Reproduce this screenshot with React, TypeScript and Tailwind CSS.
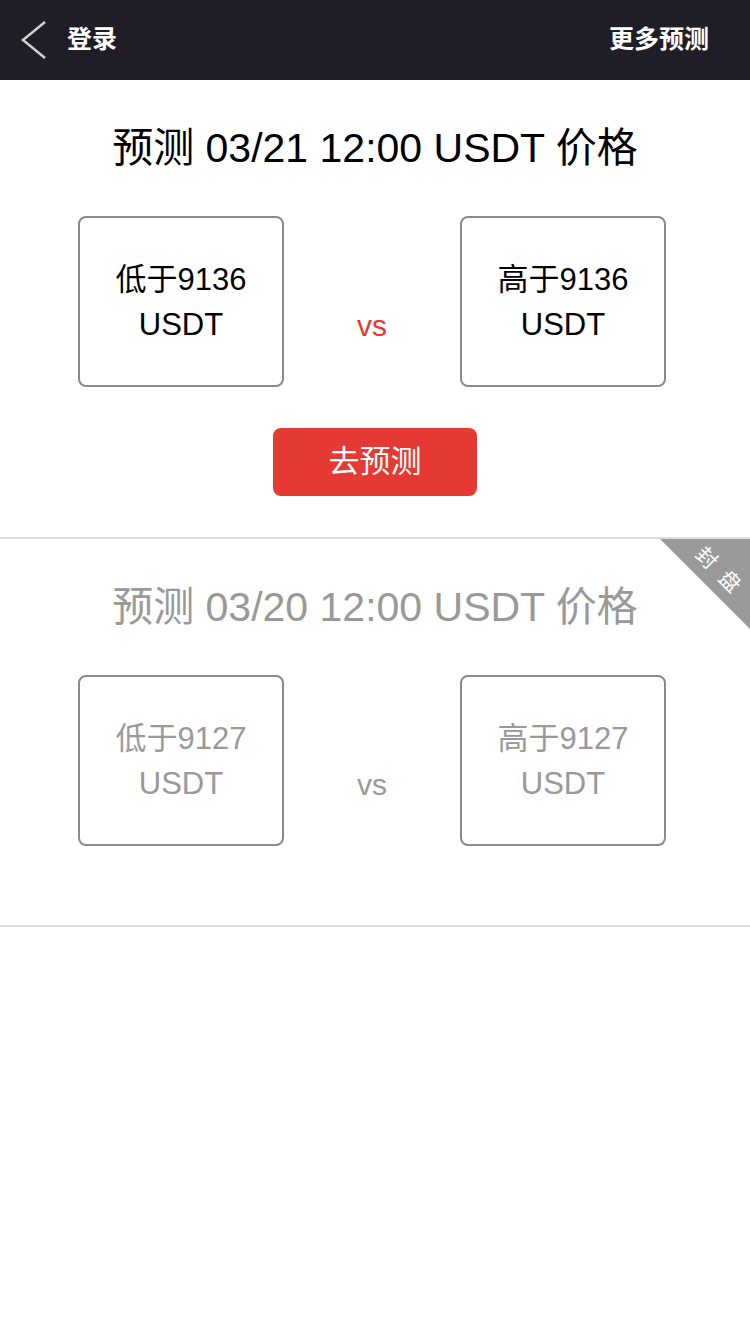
import React from "react";

const font = { fontFamily: '"Liberation Sans", "Noto Sans CJK SC", sans-serif' };

function Box({ label, gray }: { label: string; gray?: boolean }) {
  return (
    <div
      className={`w-[206px] h-[171px] rounded-[8px] border-2 border-[#8a8a8a] flex flex-col items-center justify-center text-[31px] leading-[45px] ${
        gray ? "text-[#999999]" : "text-black"
      }`}
    >
      <div>{label}</div>
      <div>USDT</div>
    </div>
  );
}

function Section({
  date,
  price,
  closed,
}: {
  date: string;
  price: string;
  closed?: boolean;
}) {
  return (
    <div
      className={`relative overflow-hidden border-b-2 border-[#dddddd] pt-[46px] ${
        closed ? "pb-[79px]" : "pb-[41px]"
      }`}
    >
      <div
        className={`h-[44px] leading-[44px] text-center text-[41px] ${
          closed ? "text-[#999999]" : "text-black"
        }`}
      >
        预测 {date} 12:00 USDT 价格
      </div>
      <div className="mt-[46px] flex justify-center items-center pr-[6px]">
        <Box label={`低于${price}`} gray={closed} />
        <div
          className={`w-[176px] text-center text-[30px] pt-[48px] ${
            closed ? "text-[#999999]" : "text-[#e5392f]"
          }`}
        >
          vs
        </div>
        <Box label={`高于${price}`} gray={closed} />
      </div>
      {!closed && (
        <div className="mt-[41px] flex justify-center">
          <button className="w-[204px] h-[68px] rounded-[8px] bg-[#e53a33] text-white text-[31px]">
            去预测
          </button>
        </div>
      )}
      {closed && (
        <div className="absolute top-0 right-0 w-[90px] h-[90px]">
          <div
            className="absolute inset-0 bg-[#9a9a9a]"
            style={{ clipPath: "polygon(0 0, 100% 0, 100% 100%)" }}
          />
          <div className="absolute left-[28px] top-[19px] w-[60px] h-[24px] flex justify-center gap-[12px] rotate-45 whitespace-nowrap text-white text-[21px] leading-[24px]">
            <span>封</span>
            <span>盘</span>
          </div>
        </div>
      )}
    </div>
  );
}

export default function App() {
  return (
    <div className="w-[750px] min-h-[1334px] bg-white" style={font}>
      <div className="h-[80px] bg-[#1f1e27] flex items-center justify-between pl-[18px] pr-[41px]">
        <div className="flex items-center">
          <svg width="30" height="40" viewBox="0 0 30 40" fill="none">
            <path d="M27 2 L5 20 L27 38" stroke="#cfcfcf" strokeWidth="2.5" />
          </svg>
          <span className="ml-[19px] text-white text-[25px] font-bold">登录</span>
        </div>
        <span className="text-white text-[25px] font-bold">更多预测</span>
      </div>
      <Section date="03/21" price="9136" />
      <Section date="03/20" price="9127" closed />
    </div>
  );
}
